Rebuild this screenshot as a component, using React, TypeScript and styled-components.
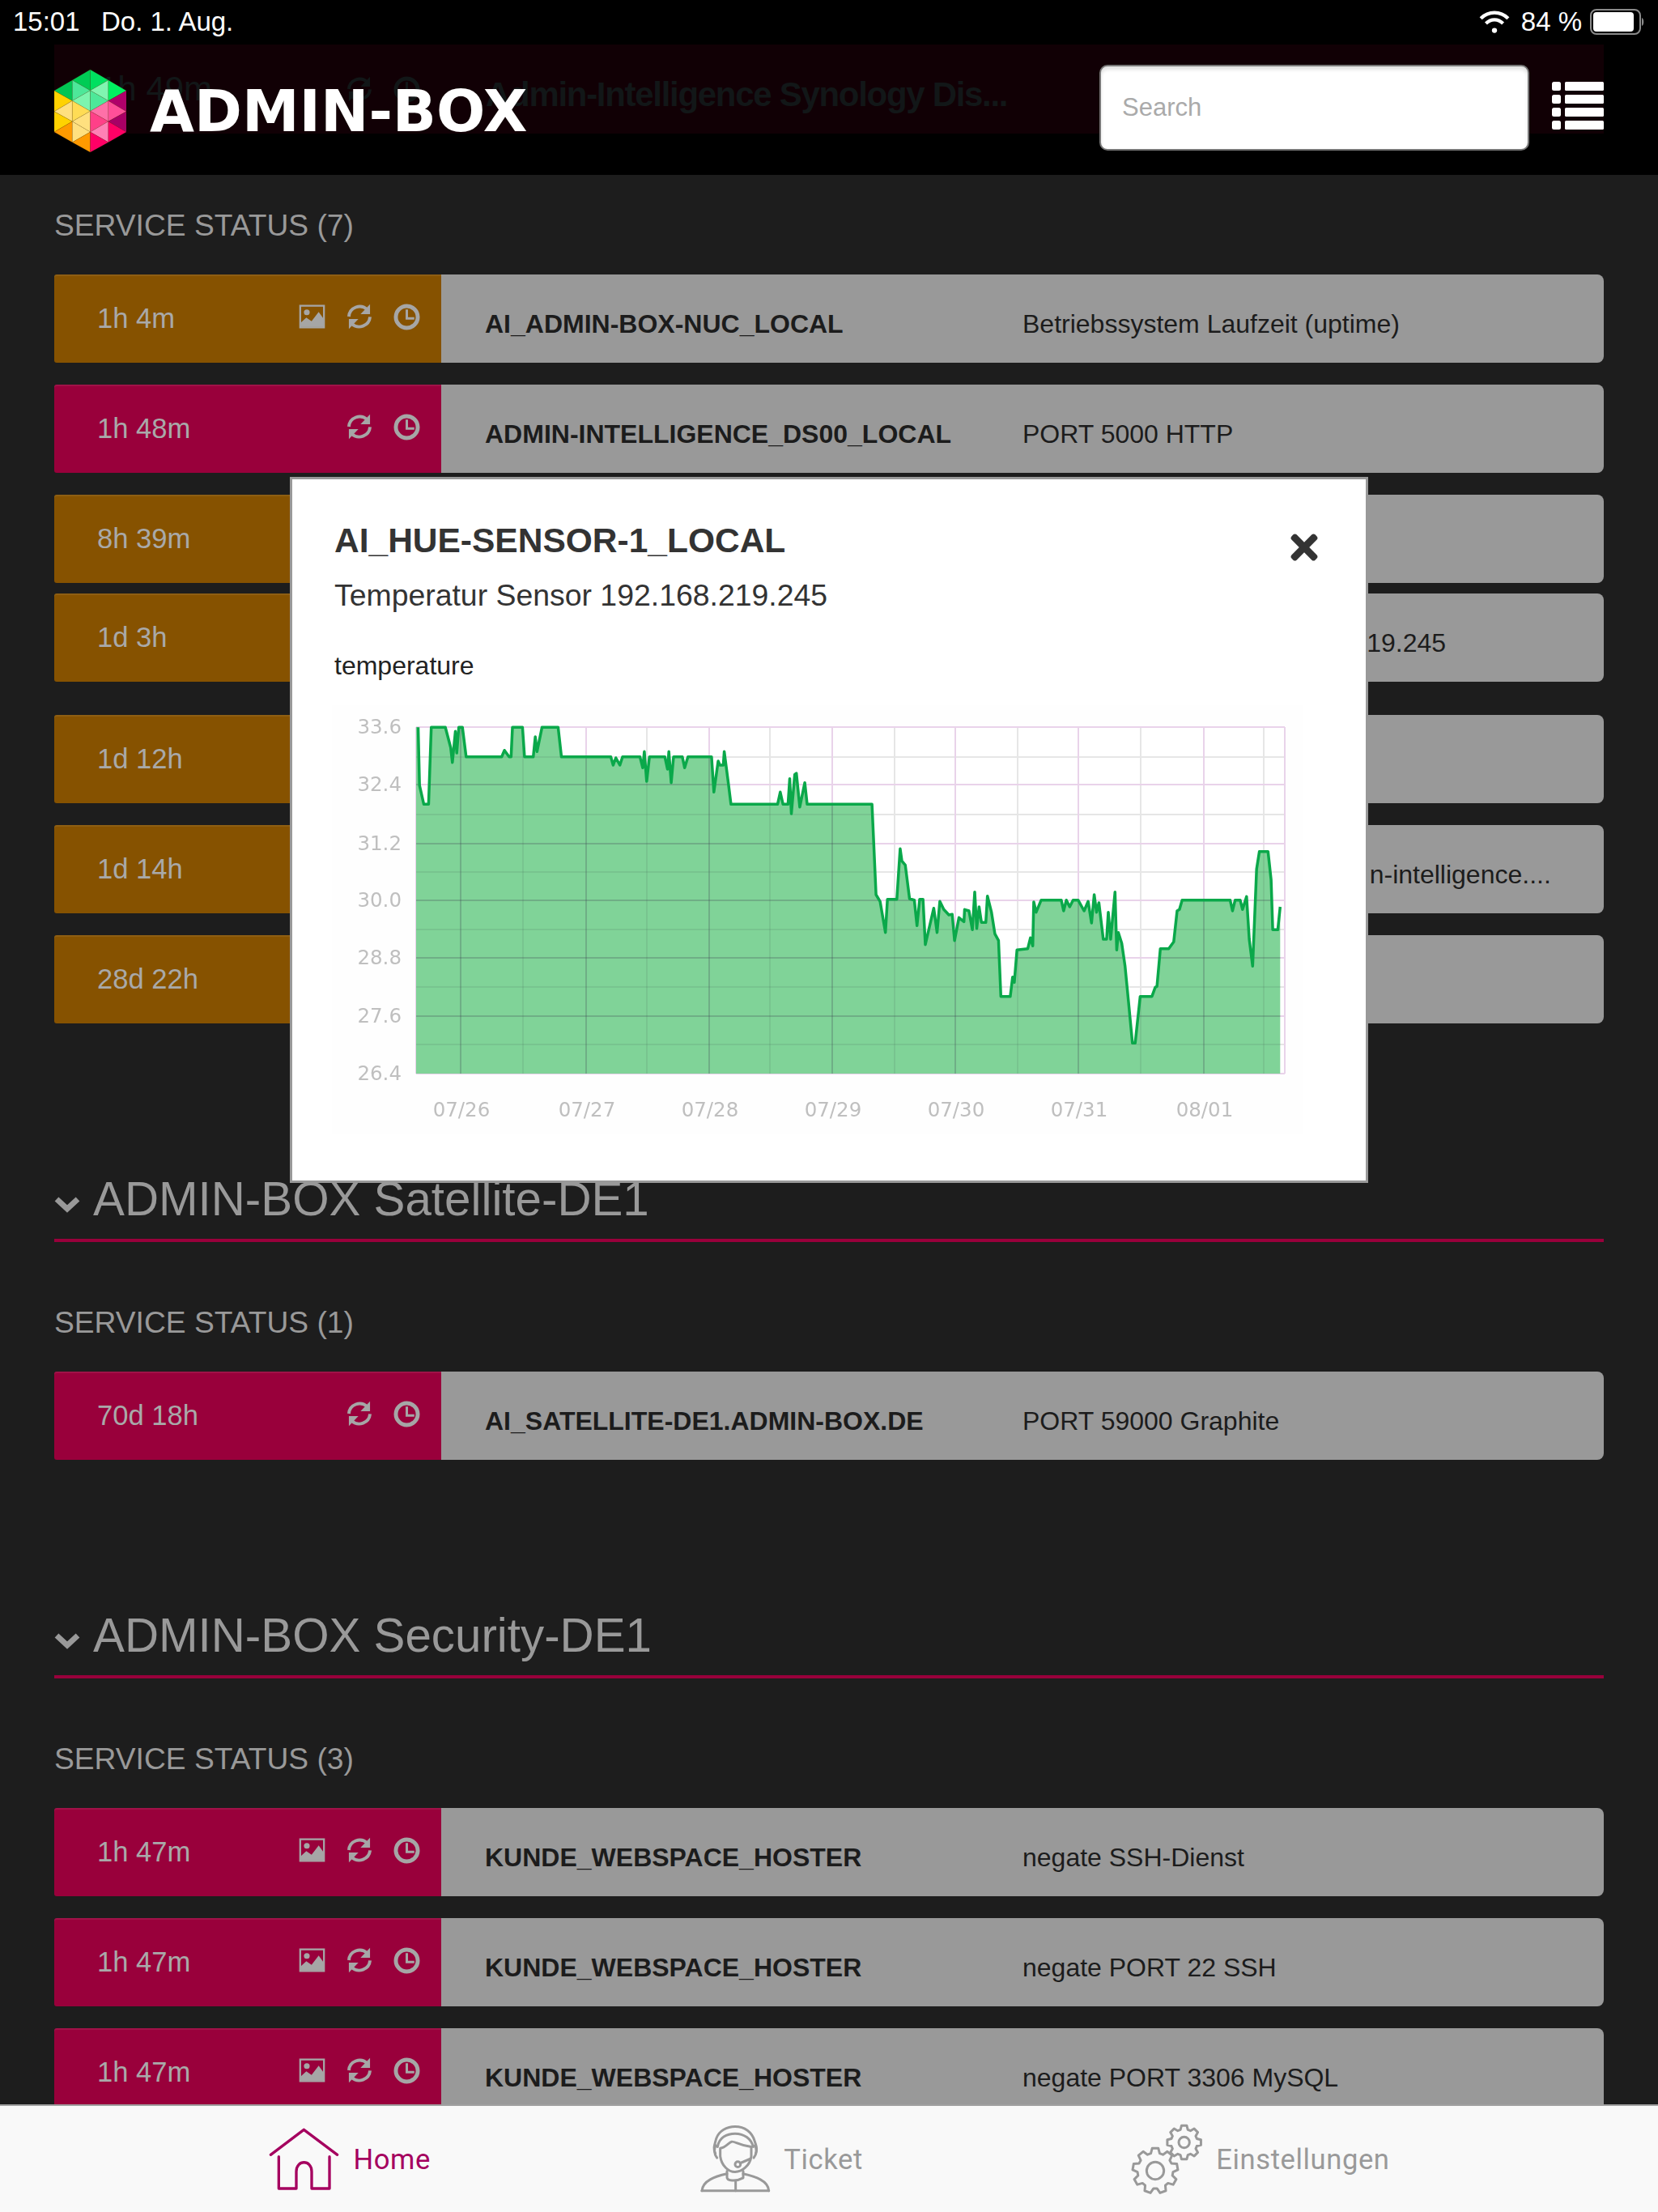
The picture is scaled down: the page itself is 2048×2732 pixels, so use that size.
import React from 'react';
import styled, { createGlobalStyle } from 'styled-components';
import { FaTimes } from 'react-icons/fa';

const GlobalStyle = createGlobalStyle`
html, body {
    margin: 0;
    padding: 0;
    background: #1d1d1d;
}
* {
    box-sizing: border-box;
}
`;

const AMBER = '#865200';
const CRIMSON = '#99003b';

// traced from the two halves of the chart, in crop coordinates
const LEFT_TRACE = [[281,115],[285,330],[298,400],[312,400],[320,115],[362,115],[378,190],[383,245],[392,130],[396,210],[402,115],[413,115],[424,224],[530,224],[538,200],[552,224],[558,224],[562,115],[592,115],[598,224],[624,224],[630,150],[635,205],[650,115],[698,115],[708,224],[855,224],[862,255],[870,228],[882,255],[890,224],[942,224],[950,265],[955,205],[962,315],[970,224],[1016,224],[1024,270],[1028,205],[1035,320],[1042,224],[1068,224],[1075,265],[1085,224],[1155,224],[1162,355],[1175,240],[1180,255],[1190,255],[1193,205],[1205,320],[1213,400],[1352,400],[1360,355],[1368,400],[1383,400],[1388,305],[1393,435],[1403,290],[1408,285],[1418,410],[1433,320],[1440,400]];
const RIGHT_TRACE = [[0,400],[186,400],[198,735],[210,760],[226,875],[232,752],[260,752],[270,565],[275,610],[285,625],[298,750],[312,755],[320,850],[328,752],[338,752],[345,920],[355,865],[370,785],[380,875],[388,760],[400,790],[415,810],[425,808],[432,905],[445,820],[460,835],[462,790],[475,795],[485,865],[492,725],[498,860],[505,780],[512,838],[525,838],[530,740],[542,800],[552,880],[563,905],[570,1112],[598,1112],[605,1040],[610,1060],[618,940],[650,935],[658,895],[665,925],[668,762],[675,800],[690,755],[750,755],[757,795],[765,755],[775,780],[785,755],[800,755],[818,795],[830,760],[840,840],[848,735],[855,800],[862,765],[875,900],[885,900],[890,800],[897,900],[910,725],[915,940],[920,875],[930,915],[940,1000],[950,1130],[962,1285],[970,1285],[985,1112],[1020,1112],[1030,1078],[1035,1075],[1045,935],[1070,935],[1085,910],[1095,795],[1102,790],[1110,755],[1253,755],[1260,795],[1268,755],[1283,755],[1290,790],[1302,742],[1310,900],[1320,1000],[1332,640],[1340,575],[1366,575],[1375,680],[1380,865],[1395,865],[1402,780]];

const toPlot = (trace: number[][], left: number) =>
    trace.map(([x, y]) => `${(left + x / 2.412).toFixed(1)},${(860 + y / 3).toFixed(1)}`);

const linePoints = [...toPlot(LEFT_TRACE, 400), ...toPlot(RIGHT_TRACE, 1000)];
const PLOT = { left: 514, right: 1587, top: 898, bottom: 1326 };
const lastX = linePoints[linePoints.length - 1].split(',')[0];
const areaPoints = [`${PLOT.left},${PLOT.bottom}`, `${PLOT.left},${PLOT.top}`, ...linePoints, `${lastX},${PLOT.bottom}`].join(' ');

const MAJOR_X = [569, 724, 876, 1028, 1180, 1332, 1487];
const MINOR_X = [646, 799, 951, 1105, 1257, 1409, 1561];
const MAJOR_Y = [898, 969, 1042, 1112, 1183, 1255, 1326];
const MINOR_Y = [935, 1006, 1077, 1148, 1219, 1290];
const Y_LABELS = ['33.6', '32.4', '31.2', '30.0', '28.8', '27.6', '26.4'];
const X_LABELS = ['07/26', '07/27', '07/28', '07/29', '07/30', '07/31', '08/01'];

const GridLines = ({ xs, ys, stroke }: { xs: number[], ys: number[], stroke: string }) => (
    <g stroke={stroke} strokeWidth={2}>
        {ys.map(y => <line key={y} x1={PLOT.left} x2={PLOT.right} y1={y} y2={y} />)}
        {xs.map(x => <line key={x} x1={x} x2={x} y1={PLOT.top} y2={PLOT.bottom} />)}
    </g>
);

const Chart = () => (
    <ChartSvg viewBox="410 871 1200 529" width={1200} height={529}>
        <defs>
            <clipPath id="area-clip"><polygon points={areaPoints} /></clipPath>
        </defs>
        <rect x={410} y={871} width={1200} height={529} fill="#fefefe" />
        <rect x={PLOT.left} y={PLOT.top} width={PLOT.right - PLOT.left} height={PLOT.bottom - PLOT.top} fill="#fff" />
        <GridLines xs={MINOR_X} ys={MINOR_Y} stroke="#e6e6e6" />
        <GridLines xs={[...MAJOR_X, PLOT.left, PLOT.right]} ys={MAJOR_Y} stroke="#e9d3ea" />
        <polygon points={areaPoints} fill="#80d398" />
        <g clipPath="url(#area-clip)">
            <GridLines xs={MINOR_X} ys={MINOR_Y} stroke="rgba(50,70,70,.1)" />
            <GridLines xs={MAJOR_X} ys={MAJOR_Y.slice(1, 6)} stroke="rgba(60,60,80,.24)" />
        </g>
        <polyline points={linePoints.join(' ')} fill="none" stroke="#0aa84a" strokeWidth={3.5} strokeLinejoin="round" />
        {Y_LABELS.map((label, i) => <AxisText key={label} x={496} y={MAJOR_Y[i] + 8} textAnchor="end">{label}</AxisText>)}
        {X_LABELS.map((label, i) => <AxisText key={label} x={MAJOR_X[i] + 1} y={1379} textAnchor="middle">{label}</AxisText>)}
    </ChartSvg>
);

// logo hexagon, triangulated on a grid of five columns
const col = [67, 89.3, 111.5, 133.8, 156];
const a = [112, 137.7, 163];
const b = [99, 124.5, 150, 175.7];
const c = [86, 111.7, 137.3, 163, 188];
const tri = (x1: number, y1: number, x2: number, y2: number, x3: number, y3: number, fill: string) => ({ d: `${x1},${y1} ${x2},${y2} ${x3},${y3}`, fill });
const logoTriangles = [
    tri(col[0], a[0], col[1], b[0], col[1], b[1], '#00c553'),
    tri(col[0], a[0], col[0], a[1], col[1], b[1], '#ffd200'),
    tri(col[0], a[1], col[1], b[1], col[1], b[2], '#ffe07f'),
    tri(col[0], a[1], col[0], a[2], col[1], b[2], '#ffd200'),
    tri(col[0], a[2], col[1], b[2], col[1], b[3], '#ff9a00'),
    tri(col[1], b[0], col[2], c[0], col[2], c[1], '#00cc55'),
    tri(col[1], b[0], col[1], b[1], col[2], c[1], '#4de899'),
    tri(col[1], b[1], col[2], c[1], col[2], c[2], '#7cf5ae'),
    tri(col[1], b[1], col[1], b[2], col[2], c[2], '#ffdc55'),
    tri(col[1], b[2], col[2], c[2], col[2], c[3], '#ffe07f'),
    tri(col[1], b[2], col[1], b[3], col[2], c[3], '#ffe07f'),
    tri(col[1], b[3], col[2], c[3], col[2], c[4], '#ff9a00'),
    tri(col[2], c[0], col[2], c[1], col[3], b[0], '#00e060'),
    tri(col[2], c[1], col[3], b[0], col[3], b[1], '#80f5b0'),
    tri(col[2], c[1], col[2], c[2], col[3], b[1], '#4de899'),
    tri(col[2], c[2], col[3], b[1], col[3], b[2], '#ff70a8'),
    tri(col[2], c[2], col[2], c[3], col[3], b[2], '#ff4088'),
    tri(col[2], c[3], col[3], b[2], col[3], b[3], '#ff80b5'),
    tri(col[2], c[3], col[2], c[4], col[3], b[3], '#ff0066'),
    tri(col[3], b[0], col[4], a[0], col[3], b[1], '#00f060'),
    tri(col[3], b[1], col[4], a[0], col[4], a[1], '#b0006a'),
    tri(col[3], b[1], col[3], b[2], col[4], a[1], '#ff4f99'),
    tri(col[3], b[2], col[4], a[1], col[4], a[2], '#a80066'),
    tri(col[3], b[2], col[3], b[3], col[4], a[2], '#ff0066'),
];

const LogoMark = () => (
    <svg viewBox="67 86 89 102" width={89} height={102}>
        {logoTriangles.map(t => <polygon key={t.d} points={t.d} fill={t.fill} stroke="rgba(120,90,0,.25)" strokeWidth={0.5} />)}
    </svg>
);

const PictureIcon = () => (
    <svg viewBox="40 40 100 92" width={33} height={30} fill="none">
        <rect x={45} y={45} width={90} height={82} stroke="currentColor" strokeWidth={7} />
        <circle cx={70} cy={70} r={11} fill="currentColor" />
        <polygon points="48,125 48,108 68,90 88,104 115,68 132,92 132,125" fill="currentColor" />
    </svg>
);

const RefreshIcon = () => (
    <svg viewBox="220 34 96 98" width={32} height={32} fill="none">
        <path d="M228 83 A41 41 0 0 1 297 56" stroke="currentColor" strokeWidth={12} />
        <polygon points="308,36 308,74 272,74" fill="currentColor" />
        <path d="M308 84 A41 41 0 0 1 239 110" stroke="currentColor" strokeWidth={12} />
        <polygon points="228,130 228,92 264,92" fill="currentColor" />
    </svg>
);

const ClockIcon = () => (
    <svg viewBox="394 33 100 100" width={33} height={33} fill="none">
        <circle cx={444} cy={83} r={41} stroke="currentColor" strokeWidth={15} />
        <path d="M444 55 V88 H472" stroke="currentColor" strokeWidth={9} />
    </svg>
);

const StatusIcons = ({ picture }: { picture?: boolean }) => (
    <IconGroup>
        {picture && <PictureIcon />}
        <RefreshIcon />
        <ClockIcon />
    </IconGroup>
);

const Wifi = () => (
    <svg viewBox="0 0 36 28" width={38} height={30} fill="none" stroke="#fff" strokeWidth={4}>
        <path d="M2 10 C11 1 25 1 34 10" />
        <path d="M8 16 C14 10 22 10 28 16" />
        <circle cx={18} cy={24} r={3} fill="#fff" stroke="none" />
    </svg>
);

const Battery = () => (
    <svg viewBox="0 0 68 32" width={68} height={32}>
        <rect x={1} y={1} width={61} height={30} rx={7} fill="none" stroke="#8a8a8a" strokeWidth={2} />
        <rect x={4} y={4} width={50} height={24} rx={4} fill="#fff" />
        <path d="M64 11 C67 12 67 20 64 21 Z" fill="#8a8a8a" />
    </svg>
);

const ListIcon = () => (
    <svg viewBox="0 0 64 59" width={64} height={59} fill="#fff">
        {[0, 16, 32, 48].map(y => (
            <g key={y}>
                <rect x={0} y={y} width={11} height={11} rx={2.5} />
                <rect x={16} y={y} width={48} height={11} rx={1.5} />
            </g>
        ))}
    </svg>
);

const gearPath = (cx: number, cy: number, outer: number, inner: number, teeth: number) => {
    const step = (Math.PI * 2) / teeth;
    const pts: string[] = [];
    for (let i = 0; i < teeth; i++) {
        const t = i * step - Math.PI / 2;
        [[-0.5, inner], [-0.27, outer], [0.27, outer], [0.5, inner]].forEach(([k, r]) => {
            const ang = t + k * step * 0.72;
            pts.push(`${(cx + Math.cos(ang) * r).toFixed(1)},${(cy + Math.sin(ang) * r).toFixed(1)}`);
        });
    }
    return pts.join(' ');
};

const HomeIcon = () => (
    <svg viewBox="60 50 270 240" width={90} height={80} fill="none" stroke="currentColor" strokeWidth={10} strokeLinecap="round" strokeLinejoin="round">
        <path d="M70 153 L193 60 L317 153" />
        <path d="M100 160 V278 H165 V215 C165 170 222 170 222 215 V278 H288 V160" />
    </svg>
);

const TicketIcon = () => (
    <svg viewBox="60 40 270 260" width={90} height={87} fill="none" stroke="currentColor" strokeWidth={9} strokeLinecap="round" strokeLinejoin="round">
        <path d="M122 150 C112 130 120 115 125 95 C135 65 165 50 195 50 C230 50 258 70 268 105 C272 120 280 130 272 150" />
        <path d="M130 125 C135 90 165 76 195 76 C228 76 255 95 262 125" />
        <path d="M140 130 C160 128 172 108 182 106 C195 104 205 118 255 125 V160 C250 195 220 218 195 218 C170 218 145 195 140 160 Z" />
        <path d="M124 120 C116 130 116 150 128 166" />
        <path d="M268 120 C276 130 276 150 264 166" />
        <circle cx={205} cy={190} r={10} />
        <path d="M215 185 L250 170" />
        <path d="M165 215 V238 C165 250 195 256 225 240 V215" />
        <path d="M72 288 C75 250 120 235 165 225" />
        <path d="M225 225 C270 235 318 250 320 288" />
        <path d="M72 288 H320" />
        <path d="M197 252 V288" />
    </svg>
);

const GearsIcon = () => (
    <svg viewBox="50 35 270 270" width={90} height={90} fill="none" stroke="currentColor" strokeWidth={9} strokeLinejoin="round">
        <polygon points={gearPath(140, 212, 84, 66, 9)} />
        <circle cx={140} cy={212} r={32} />
        <polygon points={gearPath(247, 107, 63, 49, 8)} />
        <circle cx={247} cy={107} r={20} />
    </svg>
);

type RowData = {
    time: string;
    tone: string;
    picture?: boolean;
    name: string;
    text: string;
    after?: number;
};

const Row = ({ time, tone, picture, name, text, after }: RowData) => (
    <RowWrapper $after={after}>
        <StatusCell $tone={tone}>
            <Time>{time}</Time>
            <StatusIcons picture={picture} />
        </StatusCell>
        <InfoCell>
            <HostName>{name}</HostName>
            <ServiceText>{text}</ServiceText>
        </InfoCell>
    </RowWrapper>
);

const FIRST_GROUP: RowData[] = [
    { time: '1h 4m', tone: AMBER, picture: true, name: 'AI_ADMIN-BOX-NUC_LOCAL', text: 'Betriebssystem Laufzeit (uptime)' },
    { time: '1h 48m', tone: CRIMSON, name: 'ADMIN-INTELLIGENCE_DS00_LOCAL', text: 'PORT 5000 HTTP' },
    { time: '8h 39m', tone: AMBER, name: 'AI_HUE-BRIDGE_LOCAL', text: 'PING', after: 13 },
    { time: '1d 3h', tone: AMBER, name: 'AI_HUE-SENSOR-1_LOCAL', text: 'Bewegungsmelder: 192.168.219.245', after: 41 },
    { time: '1d 12h', tone: AMBER, name: 'AI_ADMIN-BOX-NUC_LOCAL', text: 'PING' },
    { time: '1d 14h', tone: AMBER, name: 'ADMIN-INTELLIGENCE_WEB', text: 'Kundenseite https://www.admin-intelligence....' },
    { time: '28d 22h', tone: AMBER, name: 'AI_ADMIN-BOX-NUC_LOCAL', text: 'SSL' },
];

const SECURITY_ROWS: RowData[] = [
    { time: '1h 47m', tone: CRIMSON, picture: true, name: 'KUNDE_WEBSPACE_HOSTER', text: 'negate SSH-Dienst' },
    { time: '1h 47m', tone: CRIMSON, picture: true, name: 'KUNDE_WEBSPACE_HOSTER', text: 'negate PORT 22 SSH' },
    { time: '1h 47m', tone: CRIMSON, picture: true, name: 'KUNDE_WEBSPACE_HOSTER', text: 'negate PORT 3306 MySQL' },
];

const App = () => {
    return (
        <Page>
            <GlobalStyle />
            <Header>
                <GhostStrip>
                    <GhostTime>1h 49m</GhostTime>
                    <GhostIcons><RefreshIcon /><ClockIcon /></GhostIcons>
                    <GhostTitle>Admin-Intelligence Synology Dis...</GhostTitle>
                </GhostStrip>
                <StatusBar>
                    <SystemTime>15:01</SystemTime>
                    <SystemDate>Do. 1. Aug.</SystemDate>
                    <SystemRight>
                        <Wifi />
                        <span>84 %</span>
                        <Battery />
                    </SystemRight>
                </StatusBar>
                <TopBar>
                    <Brand>
                        <LogoMark />
                        <BrandName>ADMIN-BOX</BrandName>
                    </Brand>
                    <SearchInput placeholder="Search" readOnly />
                    <ListButton><ListIcon /></ListButton>
                </TopBar>
            </Header>
            <Content>
                <SubHeading>SERVICE STATUS (7)</SubHeading>
                {FIRST_GROUP.map(row => <Row key={row.time} {...row} />)}
                <SectionTitle>
                    <Chevron viewBox="0 0 32 20" width={32} height={20}><path d="M3 3 L16 15 L29 3" /></Chevron>
                    ADMIN-BOX Satellite-DE1
                </SectionTitle>
                <SubHeading>SERVICE STATUS (1)</SubHeading>
                <Row time="70d 18h" tone={CRIMSON} name="AI_SATELLITE-DE1.ADMIN-BOX.DE" text="PORT 59000 Graphite" />
                <SectionTitle>
                    <Chevron viewBox="0 0 32 20" width={32} height={20}><path d="M3 3 L16 15 L29 3" /></Chevron>
                    ADMIN-BOX Security-DE1
                </SectionTitle>
                <SubHeading>SERVICE STATUS (3)</SubHeading>
                {SECURITY_ROWS.map(row => <Row key={row.text} {...row} />)}
            </Content>
            <TabBar>
                <Tab $active><HomeIcon /><span>Home</span></Tab>
                <Tab><TicketIcon /><span>Ticket</span></Tab>
                <Tab><GearsIcon /><span>Einstellungen</span></Tab>
            </TabBar>
            <Modal>
                <ModalClose><FaTimes /></ModalClose>
                <ModalTitle>AI_HUE-SENSOR-1_LOCAL</ModalTitle>
                <ModalSubtitle>Temperatur Sensor 192.168.219.245</ModalSubtitle>
                <MetricName>temperature</MetricName>
                <Chart />
            </Modal>
        </Page>
    )
}

const Page = styled.div`
position: relative;
width: 2048px;
height: 2732px;
overflow: hidden;
display: flex;
flex-direction: column;
background: #1d1d1d;
font-family: "Liberation Sans", Arial, sans-serif;
`;

const Header = styled.header`
position: relative;
height: 216px;
flex: none;
background: #000;
`;

const GhostStrip = styled.div`
position: absolute;
left: 67px;
right: 67px;
top: 55px;
height: 110px;
background: #110005;
color: #121718;
display: flex;
align-items: center;
`;

const GhostTime = styled.span`
width: 361px;
padding-left: 55px;
font-size: 42px;
`;

const GhostIcons = styled.span`
display: flex;
gap: 26px;
width: 172px;
`;

const GhostTitle = styled.span`
margin-top: 13px;
font-size: 42px;
font-weight: 700;
letter-spacing: -1.3px;
`;

const StatusBar = styled.div`
position: relative;
height: 54px;
padding: 0 16px;
display: flex;
align-items: center;
color: #fff;
font-size: 33px;
`;

const SystemTime = styled.span`
width: 109px;
`;

const SystemDate = styled.span`
flex: none;
`;

const SystemRight = styled.div`
margin-left: auto;
display: flex;
align-items: center;
gap: 14px;
svg:last-child {
    margin-left: -4px;
}
`;

const TopBar = styled.div`
position: relative;
display: flex;
align-items: flex-start;
padding: 26px 67px 0;
`;

const Brand = styled.div`
display: flex;
align-items: center;
gap: 29px;
margin-top: 6px;
margin-right: auto;
`;

const BrandName = styled.span`
font-family: "DejaVu Sans", "Liberation Sans", sans-serif;
font-size: 71px;
font-weight: 700;
color: #fff;
line-height: 1;
`;

const SearchInput = styled.input`
width: 531px;
height: 106px;
border: 2px solid #777;
border-radius: 10px;
background: #fff;
box-shadow: inset 0 4px 4px rgba(0, 0, 0, .12);
padding: 0 26px;
font-family: "Liberation Sans", Arial, sans-serif;
font-size: 31px;
outline: none;
&::placeholder {
    color: #aaa;
}
`;

const ListButton = styled.div`
margin: 21px 0 0 28px;
line-height: 0;
`;

const Content = styled.main`
flex: 1;
min-height: 0;
overflow: hidden;
padding: 42px 67px 0;
`;

const SubHeading = styled.h4`
margin: 0 0 41px;
font-size: 37.2px;
line-height: 40px;
font-weight: 400;
color: #999;
`;

const RowWrapper = styled.div<{ $after?: number }>`
display: flex;
height: 109px;
margin-bottom: ${props => props.$after ?? 27}px;
`;

const StatusCell = styled.div<{ $tone: string }>`
width: 478px;
flex: none;
display: flex;
align-items: center;
padding: 0 26px 0 53px;
background: ${props => props.$tone};
box-shadow: inset 0 2px 0 rgba(255, 255, 255, .07);
color: #a9a9a9;
border-radius: 3px 0 0 3px;
`;

const Time = styled.span`
font-size: 34.6px;
margin-right: auto;
`;

const IconGroup = styled.span`
display: flex;
align-items: center;
gap: 26px;
margin-bottom: 5px;
color: #a6a6a6;
`;

const InfoCell = styled.div`
flex: 1;
display: flex;
align-items: center;
padding: 13px 0 0 54px;
background: #999;
border-radius: 0 8px 8px 0;
color: #1c1c1c;
font-size: 32px;
white-space: nowrap;
overflow: hidden;
`;

const HostName = styled.span`
width: 664px;
flex: none;
font-weight: 700;
`;

const ServiceText = styled.span`
flex: none;
`;

const SectionTitle = styled.h2`
margin: 182px 0 79px;
padding-bottom: 14px;
border-bottom: 4px solid #99003b;
display: flex;
align-items: center;
gap: 16px;
font-size: 58.3px;
line-height: 70px;
font-weight: 400;
color: #999;
`;

const Chevron = styled.svg`
flex: none;
margin-top: 14px;
fill: none;
stroke: #999;
stroke-width: 7;
`;

const TabBar = styled.nav`
height: 133px;
flex: none;
position: relative;
background: #f9f9f9;
border-top: 2px solid #a0a0a0;
display: flex;
align-items: center;
justify-content: space-evenly;
`;

const Tab = styled.div<{ $active?: boolean }>`
display: flex;
align-items: center;
gap: 15px;
font-family: Roboto, "Liberation Sans", sans-serif;
font-size: 34.6px;
letter-spacing: 0.6px;
color: ${props => (props.$active ? '#a5005f' : '#999')};
`;

const Modal = styled.div`
position: absolute;
left: 358px;
top: 589px;
width: 1332px;
height: 872px;
background: #fff;
border: 3px solid #999;
padding: 51px 52px 0;
`;

const ModalClose = styled.div`
position: absolute;
left: 1226px;
top: 60px;
font-size: 48px;
line-height: 0;
color: #333;
`;

const ModalTitle = styled.h3`
margin: 0;
font-size: 42.5px;
line-height: 50px;
font-weight: 700;
color: #333;
`;

const ModalSubtitle = styled.div`
margin-top: 20px;
font-size: 37.4px;
line-height: 44px;
color: #333;
`;

const MetricName = styled.div`
margin-top: 47px;
font-size: 32px;
line-height: 36px;
color: #222;
`;

const ChartSvg = styled.svg`
display: block;
margin: 31px 0 0 -3px;
filter: blur(0.6px);
`;

const AxisText = styled.text`
font-family: "DejaVu Sans", sans-serif;
font-size: 24.5px;
fill: #bfbfbf;
`;

export default App;
